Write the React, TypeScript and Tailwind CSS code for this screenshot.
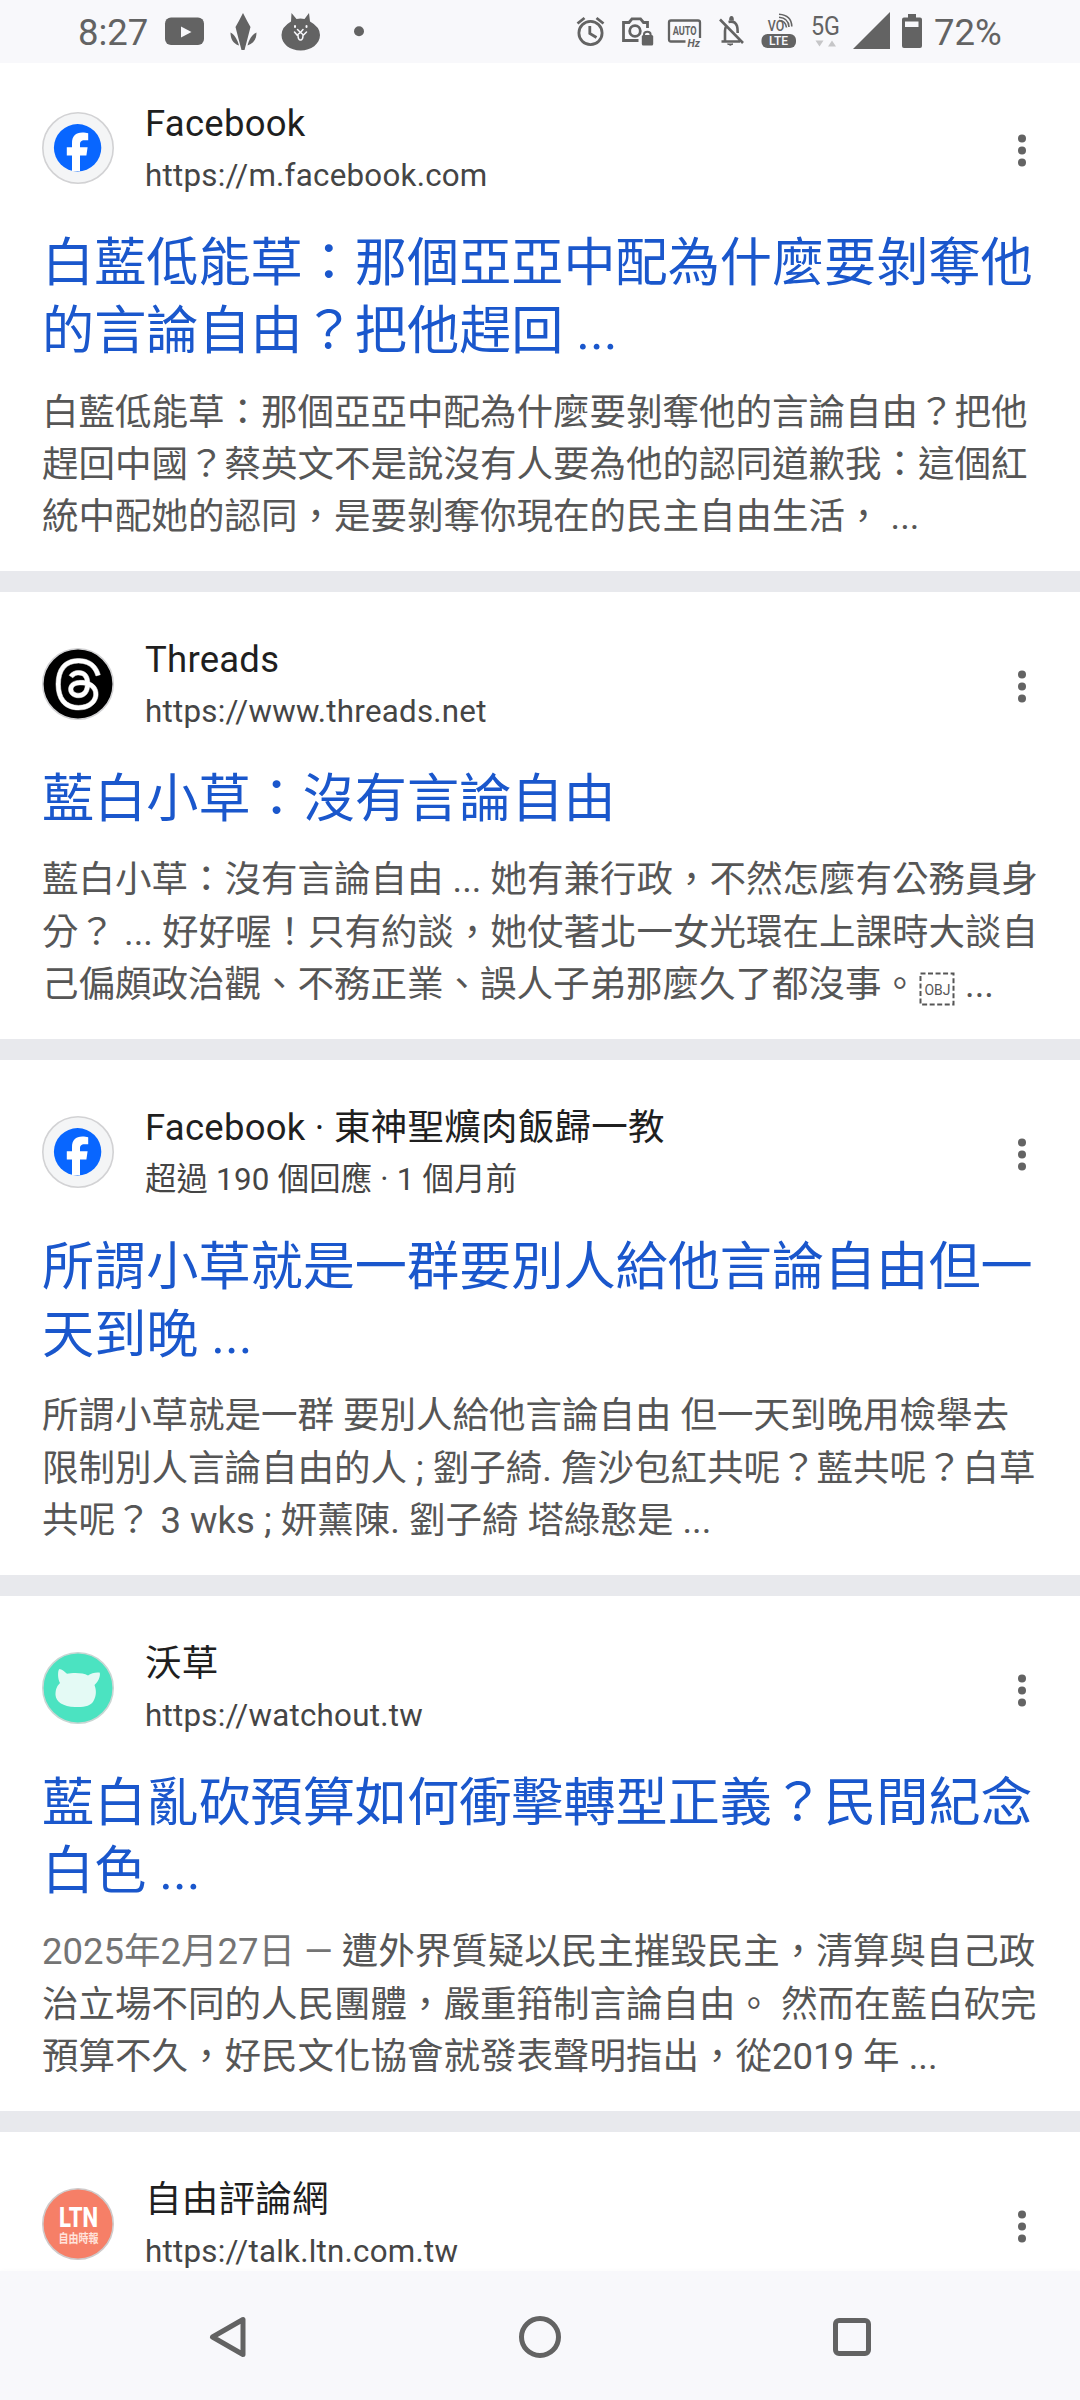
import type { ReactNode } from "react";

const G = "#636363";

function FacebookAvatar() {
  return (
    <svg width="72" height="72" viewBox="0 0 72 72">
      <circle cx="36" cy="36" r="35.2" fill="#f4f5f6" stroke="#d2d2d4" strokeWidth="1.6" />
      <circle cx="35.6" cy="35.8" r="23.7" fill="#0866ff" />
      <path
        d="M30 59V43.6H24.8V35.2H30V31.4C30 24.2 33.6 20.6 40.4 20.6C42.4 20.6 44.8 20.9 46.2 21.2V28.2H42.6C39 28.2 38 29.8 38 32.8V35.2H45.6L44.4 43.6H38V59Z"
        fill="#fff"
      />
    </svg>
  );
}

function ThreadsAvatar() {
  return (
    <svg width="72" height="72" viewBox="0 0 72 72">
      <circle cx="36" cy="36" r="35.2" fill="#000" stroke="#d2d2d4" strokeWidth="1.6" />
      <g transform="translate(10.5 10.5) scale(0.268)" fill="#fff" stroke="#fff" strokeWidth="2">
        <path d="M141.537 88.988a66.667 66.667 0 0 0-2.518-1.143c-1.482-27.307-16.403-42.94-41.457-43.1h-.34c-14.986 0-27.449 6.396-35.12 18.036l13.779 9.452c5.73-8.695 14.724-10.548 21.348-10.548h.229c8.249.053 14.474 2.452 18.503 7.129 2.932 3.405 4.893 8.111 5.864 14.05-7.314-1.243-15.224-1.626-23.68-1.14-23.82 1.371-39.134 15.264-38.105 34.568.522 9.792 5.4 18.216 13.735 23.719 7.047 4.652 16.124 6.927 25.557 6.412 12.458-.683 22.231-5.436 29.049-14.127 5.178-6.6 8.453-15.153 9.899-25.93 5.937 3.583 10.337 8.298 12.767 13.966 4.132 9.635 4.373 25.468-8.546 38.376-11.319 11.308-24.925 16.2-45.488 16.351-22.809-.169-40.06-7.484-51.275-21.742C35.236 139.966 29.808 120.682 29.605 96c.203-24.682 5.63-43.966 16.133-57.317C56.954 24.425 74.204 17.11 97.013 16.94c22.975.17 40.526 7.52 52.171 21.847 5.71 7.026 10.015 15.86 12.853 26.162l16.147-4.308c-3.44-12.68-8.853-23.606-16.219-32.668C147.036 9.607 125.202.195 97.07 0h-.113C68.882.194 47.292 9.642 32.788 28.08 19.882 44.485 13.224 67.315 13.001 95.932L13 96v.067c.224 28.617 6.882 51.447 19.788 67.854C47.292 182.358 68.882 191.806 96.957 192h.113c24.96-.173 42.554-6.708 57.048-21.189 18.963-18.945 18.392-42.692 12.142-57.27-4.484-10.454-13.033-18.945-24.723-24.553ZM98.44 129.507c-10.44.588-21.286-4.098-21.82-14.135-.397-7.442 5.296-15.746 22.461-16.735 1.966-.114 3.895-.169 5.79-.169 6.235 0 12.068.606 17.371 1.765-1.978 24.702-13.58 28.713-23.802 29.274Z" />
      </g>
    </svg>
  );
}

function WatchoutAvatar() {
  return (
    <svg width="72" height="72" viewBox="0 0 72 72">
      <circle cx="36" cy="36" r="35.2" fill="#4be3c1" stroke="#c9d6d3" strokeWidth="1.6" />
      <path
        d="M17.500 17C21 17.8 23 20 25 21.800C31 20.5 41 20.5 46 23.500C49 21 54 20 57.500 20.500C58.5 21 58.300 28 52.500 33C54.500 38 54.500 44 51.500 49C49 54 42 55.500 33 55C21 54.500 14 50 13.500 43C13.500 37 15 34 18 31C15.500 27 15.500 18 17.500 17Z"
        fill="#e4faf5"
      />
    </svg>
  );
}

function LtnAvatar() {
  return (
    <svg width="72" height="72" viewBox="0 0 72 72">
      <circle cx="36" cy="36" r="35.2" fill="#f67f67" stroke="#cfcaca" strokeWidth="1.6" />
      <text x="17" y="38.500" fontSize="28.500" fontWeight="800" fontFamily="Roboto, sans-serif" fill="#fff" textLength="39" lengthAdjust="spacingAndGlyphs">LTN</text>
      <text x="16.500" y="54.700" fontSize="12.500" fontWeight="700" fontFamily="'Noto Sans CJK TC', sans-serif" fill="#ffe3dc" textLength="40" lengthAdjust="spacingAndGlyphs">自由時報</text>
    </svg>
  );
}

type Result = {
  avatar: ReactNode;
  name: string;
  meta: string;
  title?: string[];
  lines?: ReactNode[];
  first?: boolean;
};

const Obj = () => (
  <svg className="mx-[1px] inline-block align-[-9px]" width="36" height="34" viewBox="0 0 36 34">
    <rect x="1.500" y="1.500" width="33" height="31" fill="none" stroke="#565656" strokeWidth="2" strokeDasharray="5 2.530" />
    <text x="18.500" y="22.500" textAnchor="middle" fontSize="14" fontFamily="Roboto, sans-serif" fill="#565656" textLength="26" lengthAdjust="spacingAndGlyphs">OBJ</text>
  </svg>
);

const results: Result[] = [
  {
    avatar: <FacebookAvatar />,
    name: "Facebook",
    meta: "https://m.facebook.com",
    title: ["白藍低能草：那個亞亞中配為什麼要剝奪他", "的言論自由？把他趕回 ..."],
    lines: [
      "白藍低能草：那個亞亞中配為什麼要剝奪他的言論自由？把他",
      "趕回中國？蔡英文不是說沒有人要為他的認同道歉我：這個紅",
      "統中配她的認同，是要剝奪你現在的民主自由生活， ...",
    ],
    first: true,
  },
  {
    avatar: <ThreadsAvatar />,
    name: "Threads",
    meta: "https://www.threads.net",
    title: ["藍白小草：沒有言論自由"],
    lines: [
      "藍白小草：沒有言論自由 ... 她有兼行政，不然怎麼有公務員身",
      "分？ ... 好好喔！只有約談，她仗著北一女光環在上課時大談自",
      <>己偏頗政治觀、不務正業、誤人子弟那麼久了都沒事。<Obj /> ...</>,
    ],
  },
  {
    avatar: <FacebookAvatar />,
    name: "Facebook · 東神聖爌肉飯歸一教",
    meta: "超過 190 個回應 · 1 個月前",
    title: ["所謂小草就是一群要別人給他言論自由但一", "天到晚 ..."],
    lines: [
      "所謂小草就是一群 要別人給他言論自由 但一天到晚用檢舉去",
      "限制別人言論自由的人 ; 劉子綺. 詹沙包紅共呢？藍共呢？白草",
      "共呢？ 3 wks ; 妍薰陳. 劉子綺 塔綠憨是 ...",
    ],
  },
  {
    avatar: <WatchoutAvatar />,
    name: "沃草",
    meta: "https://watchout.tw",
    title: ["藍白亂砍預算如何衝擊轉型正義？民間紀念", "白色 ..."],
    lines: [
      <><span className="text-[#747474]">2025年2月27日 — </span>遭外界質疑以民主摧毀民主，清算與自己政</>,
      "治立場不同的人民團體，嚴重箝制言論自由。 然而在藍白砍完",
      "預算不久，好民文化協會就發表聲明指出，從2019 年 ...",
    ],
  },
  { avatar: <LtnAvatar />, name: "自由評論網", meta: "https://talk.ltn.com.tw" },
];

function Card({ r }: { r: Result }) {
  return (
    <article
      className={
        r.first
          ? "border-b-[21px] border-[#e8e9ed] bg-white px-[42px] pt-[35px] pb-[27.600px]"
          : "border-b-[21px] border-[#e8e9ed] bg-white px-[42px] pt-[42px] pb-[27.600px]"
      }
    >
      <div className="flex h-[102px] items-start">
        <div className="mt-[14px] size-[72px] shrink-0">{r.avatar}</div>
        <div className="ml-[31px] flex-1 tracking-[0.250px] whitespace-nowrap">
          <div className="h-[52px] text-[36.5px] leading-[52px] text-[#1f1f1f]">{r.name}</div>
          <div className="h-[50px] text-[31.3px] leading-[52px] text-[#454545]">{r.meta}</div>
        </div>
        <svg className="mt-[32px] mr-[11px]" width="10" height="40" viewBox="0 0 10 40" fill={G}>
          <circle cx="5" cy="8.500" r="4" />
          <circle cx="5" cy="20.500" r="4" />
          <circle cx="5" cy="32.500" r="4" />
        </svg>
      </div>
      {r.title && (
        <h3 className="mt-[30px] text-[52.15px] leading-[68px] font-normal whitespace-nowrap text-[#1a57cc]">
          {r.title.map((t) => (
            <div key={t}>{t}</div>
          ))}
        </h3>
      )}
      {r.lines && (
        <div className="mt-[20.500px] text-[36.5px] leading-[52.300px] whitespace-nowrap text-[#565656]">
          {r.lines.map((l, i) => (
            <div key={i} className="h-[52.300px]">{l}</div>
          ))}
        </div>
      )}
    </article>
  );
}

function StatusBar() {
  return (
    <header className="flex h-[63px] shrink-0 items-start bg-[#f8f8fb] pl-[78px]">
      <span className="w-[86px] pt-[12px] text-[36.5px] leading-[42px] font-[450] text-[#636363]">8:27</span>
      <svg width="210" height="63" viewBox="164 0 210 63" fill={G}>
        <rect x="165" y="17.500" width="39" height="27.500" rx="6" />
        <path d="M181 26.500L191.500 32L181 37.500Z" fill="#f8f8fb" />
        <path d="M243 13Q247 21 250.500 27Q248 37 244.500 50H241.500Q238 37 235.500 27Q239 21 243 13Z" />
        <path d="M230.500 32.500C235 35 237.500 40 239 45.500C233 43.500 230.500 39 230.500 32.500Z" />
        <path d="M256.500 32.500C251.500 35 249 40 247.500 45.500C253.500 43.500 256.500 39 256.500 32.500Z" />
        <path d="M291.500 13L296.500 19Q300.500 18 304.500 19L309 13L310 21.500Q320 27 320 35C320 44 311 50.500 300.700 50.500C290 50.500 281.500 44 281.500 35Q281.500 27 291 21.500Z" />
        <g stroke="#f8f8fb" strokeWidth="1.500" fill="none" strokeLinecap="round">
          <path d="M294.500 32L297 35L300.500 32.500L303.500 35L306.500 32M297.500 29.500L300.500 32.500L303 29.500M298 35Q298 40 300.500 40Q303 40 303 35" />
          <path d="M295 26V27M306.500 26V27" strokeWidth="2" />
        </g>
        <circle cx="359" cy="31.200" r="5" />
      </svg>
      <svg className="ml-[196px]" width="364" height="63" viewBox="570 0 364 63" fill="none" stroke={G} strokeWidth="2.800">
        <circle cx="590.500" cy="33" r="11.600" />
        <path d="M589.800 26V33.500L596.500 37.500M577.500 23.500L584.500 18M603.500 23.500L596.500 18" />
        <path d="M638.500 40.500H623.500V22.500H629L632 18.800H640.500L643.500 22.500H647.500V28" />
        <circle cx="635" cy="31" r="5.300" />
        <path d="M644 36V34.500Q644 31.800 647.300 31.800Q650.600 31.800 650.600 34.500V36" strokeWidth="2" />
        <rect x="641.800" y="35" width="11.400" height="10.500" rx="1.500" fill={G} stroke="none" />
        <path d="M685.500 41.500H671Q669 41.500 669 39.500V22.500Q669 20.500 671 20.500H698Q700 20.500 700 22.500V38" strokeWidth="2.300" />
        <g fill={G} stroke="none" fontFamily="Roboto, sans-serif">
          <text x="684.700" y="35.200" fontSize="12" fontWeight="700" textAnchor="middle" textLength="24" lengthAdjust="spacingAndGlyphs">AUTO</text>
          <text x="687.500" y="46.800" fontSize="10.500" fontWeight="700" fontStyle="italic">Hz</text>
          <text x="767.800" y="31.200" fontSize="14.500" fontWeight="500" textLength="16.500" lengthAdjust="spacingAndGlyphs">VO</text>
          <rect x="761.500" y="34" width="34.500" height="14" rx="6" />
          <text x="778.500" y="45.300" fontSize="12" fontWeight="500" textAnchor="middle" fill="#f8f8fb">LTE</text>
          <text x="811" y="34.500" fontSize="25" fontWeight="450" textLength="29" lengthAdjust="spacingAndGlyphs">5G</text>
          <path d="M815.500 40.500H823.500L819.500 46.500ZM828 46.500H836L832 40.500Z" fill="#c6c6c8" />
          <path d="M853 49L890 12V49Z" />
          <path fillRule="evenodd" d="M908 14H916V17.500H920Q922 17.500 922 19.500V46Q922 48 920 48H904Q902 48 902 46V19.500Q902 17.500 904 17.500H908ZM905 21.500V27H918.500V21.500Z" />
        </g>
        <path d="M721.500 41.500H740M725 41V31Q725 28.500 726 26.500M728.500 22Q735 20.500 737 26Q737.700 28 737.700 33M720 19.500L743 43" strokeWidth="2.600" />
        <path d="M727.500 44Q730.500 46.500 733 44Z" fill={G} strokeWidth="1" />
        <path d="M730.500 20.500Q730.500 17.500 731.500 17.500Q732.500 17.500 732.500 20.500" />
        <g strokeWidth="1.600">
          <path d="M779 20.500Q785.500 20.500 786.500 27.500" />
          <path d="M779 17.300Q788.500 18 789 27" />
          <path d="M779 14.200Q791.500 15 791.800 26.500" />
        </g>
      </svg>
      <span className="pt-[12px] text-[36.500px] leading-[42px] font-[450] text-[#636363]">72%</span>
    </header>
  );
}

function NavBar() {
  return (
    <nav className="flex h-[129px] shrink-0 items-center justify-between bg-[#f8f8fb] px-[205px] pt-[3px] shadow-[0_-1px_4px_rgba(0,0,0,0.02)]">
      <svg width="46" height="46" viewBox="0 0 46 46" fill="none" stroke={G} strokeWidth="5" strokeLinejoin="round">
        <path d="M7.500 23L38 5.500V40.500Z" />
      </svg>
      <svg width="46" height="46" viewBox="0 0 46 46" fill="none" stroke={G} strokeWidth="5">
        <circle cx="23" cy="23" r="18.500" />
      </svg>
      <svg width="46" height="46" viewBox="0 0 46 46" fill="none" stroke={G} strokeWidth="5">
        <rect x="6.500" y="6.500" width="33" height="33" rx="3.500" />
      </svg>
    </nav>
  );
}

export default function App() {
  return (
    <div
      lang="zh-Hant"
      className="flex h-[2400px] w-[1080px] flex-col overflow-hidden bg-white font-['Roboto','Noto_Sans_CJK_TC',sans-serif]"
    >
      <StatusBar />
      <main className="min-h-0 flex-1 overflow-hidden">
        {results.map((r) => (
          <Card key={r.name} r={r} />
        ))}
      </main>
      <NavBar />
    </div>
  );
}
